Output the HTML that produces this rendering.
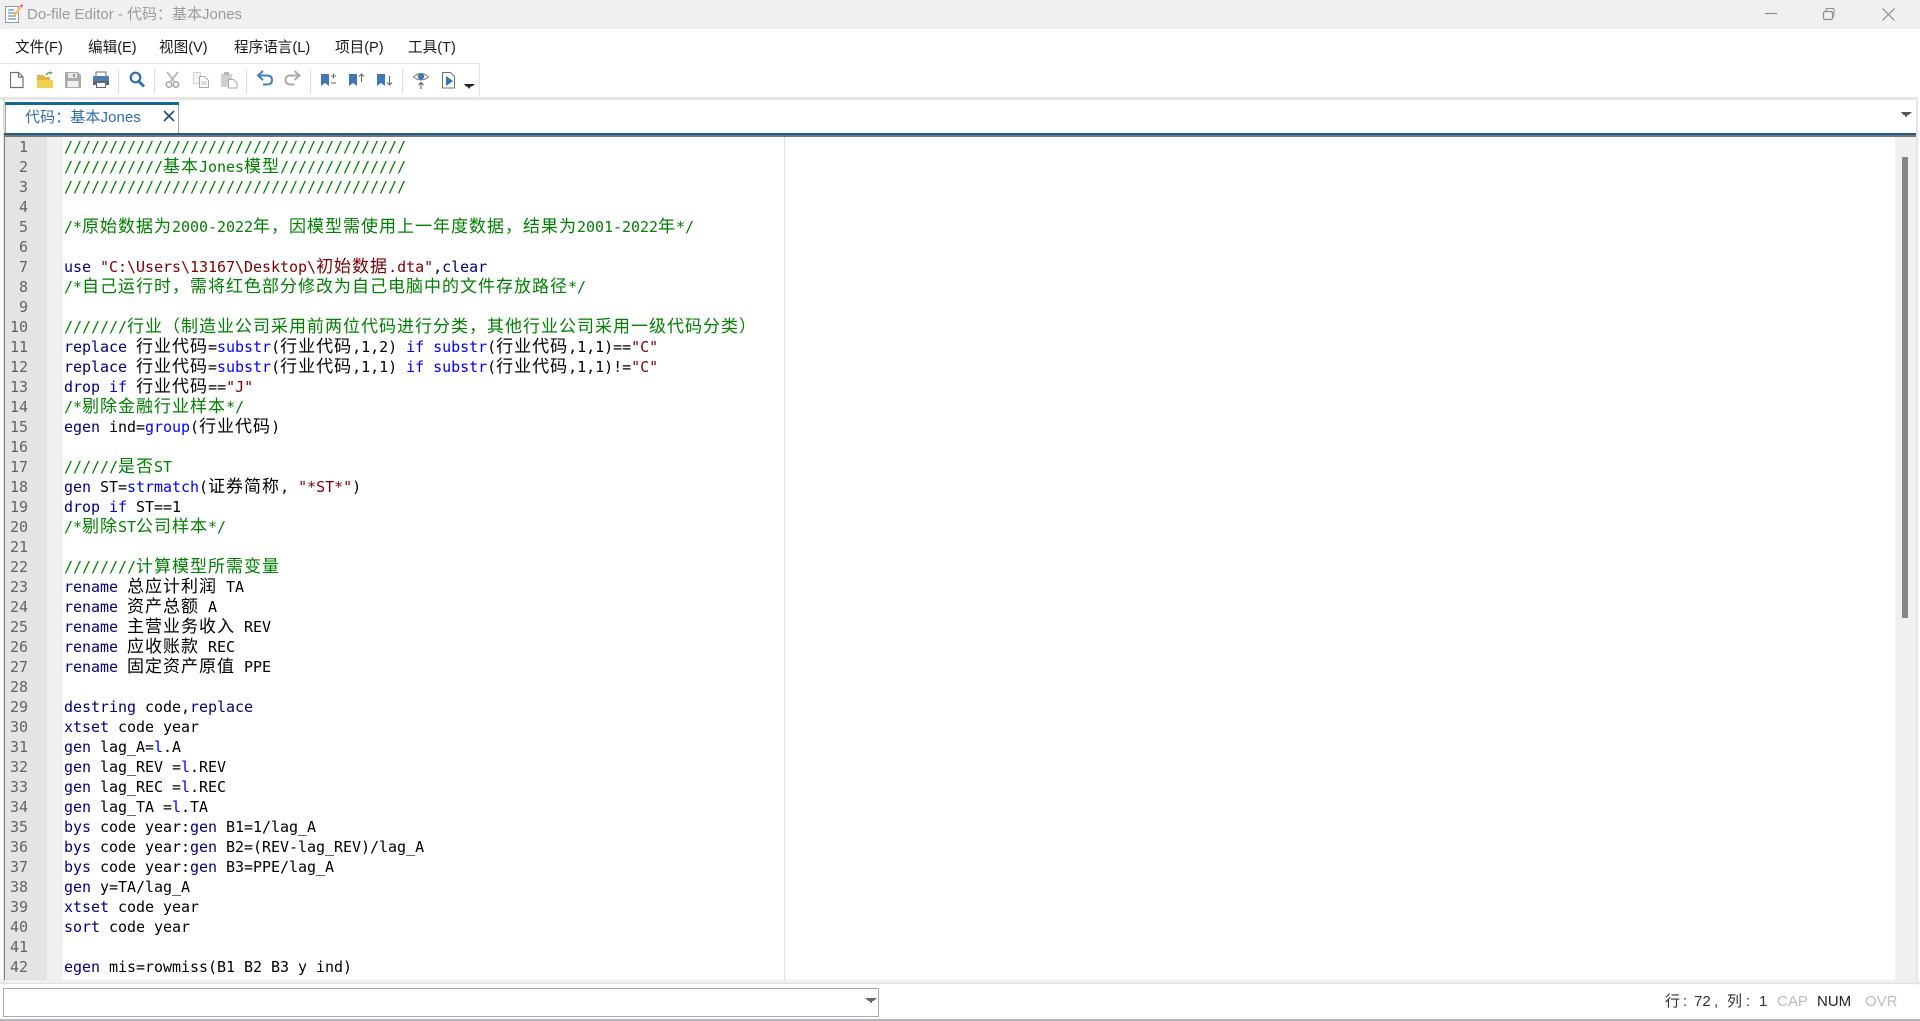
<!DOCTYPE html>
<html lang="zh">
<head>
<meta charset="utf-8">
<title>Do-file Editor</title>
<style>
html,body{margin:0;padding:0;width:1920px;height:1021px;overflow:hidden;background:#fff}
body{position:relative;font-family:"Liberation Sans","Noto Sans CJK SC",sans-serif}
.a{position:absolute}
.m{position:absolute;top:37.500px;font-size:14.600px;line-height:20px;color:#1a1a1a;white-space:pre}
.l{position:absolute;left:64px;height:20px;line-height:20px;font-family:"DejaVu Sans Mono","Noto Sans CJK SC",monospace;font-size:15px;letter-spacing:-.03px;white-space:pre;color:#000}
.l i{font-family:"Noto Sans CJK SC",sans-serif;font-style:normal;font-size:17px;letter-spacing:1px;font-weight:400;line-height:0}
.num{position:absolute;left:5px;width:23px;margin-top:0;text-align:right;height:20px;line-height:20px;font-family:"DejaVu Sans Mono",monospace;font-size:15px;color:#636363}
.g{color:#008000}.n{color:#00007f}.b{color:#0000ff}.r{color:#7f0000}
.s{position:absolute;top:992px;font-size:15px;line-height:20px;white-space:pre}
</style>
</head>
<body>
<!-- title bar -->
<div class="a" style="left:0;top:0;width:1920px;height:29px;background:#f0f0f0"></div>
<svg class="a" style="left:0;top:0" width="30" height="29" viewBox="0 0 30 29">
<rect x="5.500" y="6.500" width="13" height="16" fill="#fff" stroke="#9a9a9a"/>
<path d="M8 10h6M8 13h7M8 16h8M8 19h8" stroke="#5a93cc" stroke-width="1.300"/>
<path d="M13 15l7-9 1.800 1.500-7 9-2.800 1z" fill="#f0c060"/>
<path d="M20 6l1.500-2 1.800 1.500-1.500 2z" fill="#e8606a"/>
</svg>
<div class="a" style="left:27px;top:5px;font-size:15px;line-height:20px;color:#9b9b9b;white-space:pre">Do-file Editor - 代码：基本Jones</div>
<svg class="a" style="left:1700px;top:0" width="220" height="29" viewBox="0 0 220 29" fill="none" stroke="#8e8e8e">
<path d="M65 13.500h12" stroke-width="1.200"/>
<rect x="123.500" y="11.500" width="9" height="8" rx="1.500" stroke-width="1.200"/>
<path d="M126 11V9.500q0-1 1-1h6q1 0 1 1v6q0 1-1 1h-1" stroke-width="1"/>
<path d="M182.500 8.500l12 12M194.500 8.500l-12 12" stroke-width="1.200"/>
</svg>
<!-- menu -->
<div class="m" style="left:15px">文件(F)</div>
<div class="m" style="left:88px">编辑(E)</div>
<div class="m" style="left:159px">视图(V)</div>
<div class="m" style="left:234px">程序语言(L)</div>
<div class="m" style="left:335px">项目(P)</div>
<div class="m" style="left:408px">工具(T)</div>
<!-- toolbar -->
<div class="a" style="left:0;top:63px;width:479px;height:33px;border:1px solid #e2e2e2;border-left:0"></div>
<div class="a" style="left:0;top:97px;width:1917px;height:3px;background:#e6e6e6"></div>
<div class="a" style="left:1916px;top:97px;width:2px;height:888px;background:#e6e6e6"></div>
<div class="a" style="left:3px;top:97px;width:2px;height:888px;background:#e0e0e0"></div>
<svg class="a" style="left:0;top:63px" width="480" height="34" viewBox="0 63 480 34">
<g fill="#dcdcdc"><rect x="118" y="69" width="1" height="25"/><rect x="154" y="69" width="1" height="25"/><rect x="246" y="69" width="1" height="25"/><rect x="310" y="69" width="1" height="25"/><rect x="402" y="69" width="1" height="25"/></g>
<!-- new -->
<path d="M10.500 72.500h8l4.500 4.500v10.500h-12.500z M18.500 72.500v4.500h4.500" fill="#fff" stroke="#707070" stroke-width="1.200"/>
<!-- open -->
<path d="M37 75h6l2 2h5v3h-13z" fill="#e4b33d"/><path d="M37 80h16v8h-16z" fill="#f2d14e"/><path d="M46 75q2-3 5-2" fill="none" stroke="#5fae54" stroke-width="1.600"/><path d="M50 71l3 2-3 1.500z" fill="#5fae54"/>
<!-- save -->
<path d="M65 72h13l3 3v13h-16z" fill="#ababab"/><rect x="68" y="73" width="9" height="5" fill="#e8e8e8"/><rect x="67.500" y="81" width="11" height="6" fill="#f0f0f0"/><rect x="73" y="74" width="2" height="3" fill="#999"/>
<!-- print -->
<rect x="96" y="72" width="10" height="5" fill="#fff" stroke="#6b6b6b"/>
<rect x="93" y="76" width="16" height="8" rx="1" fill="#4b7fb8"/>
<rect x="93" y="81" width="16" height="4" fill="#666"/>
<rect x="96.500" y="82.500" width="9" height="5" fill="#fff" stroke="#666"/>
<!-- search -->
<circle cx="135.500" cy="77.500" r="4.800" fill="none" stroke="#2a6fb0" stroke-width="2.200"/>
<path d="M139 81.500l5 5" stroke="#2a6fb0" stroke-width="2.800"/>
<!-- cut -->
<path d="M167 72l7 9M178 72l-7 9" stroke="#b0b0b0" stroke-width="1.800" fill="none"/>
<circle cx="169" cy="84.500" r="2.700" fill="none" stroke="#a5a5a5" stroke-width="1.500"/><circle cx="176" cy="84.500" r="2.700" fill="none" stroke="#a5a5a5" stroke-width="1.500"/>
<!-- copy -->
<path d="M193.500 72.500h7v11h-7z" fill="#f4f4f4" stroke="#d2d2d2"/><path d="M199.500 76.500h5l4 4v7h-9z" fill="#fff" stroke="#aaa"/><path d="M201 82h6M201 84h6" stroke="#bbb"/>
<!-- paste -->
<path d="M221 74h11v13h-11z" fill="#cfcfcf"/><rect x="224" y="72" width="5" height="3" fill="#b5b5b5"/><path d="M228.500 79.500h5l3.500 3.500v5h-8.500z" fill="#fff" stroke="#a8a8a8"/>
<!-- undo -->
<path d="M259.500 75.500h7.500q5 0 5 4.500t-5 4.500h-4" fill="none" stroke="#3f7fb8" stroke-width="1.900"/><path d="M263 71l-5 4.500 5 4.500" fill="none" stroke="#3f7fb8" stroke-width="1.900"/>
<!-- redo -->
<path d="M298 75.500h-7.500q-5 0-5 4.500t5 4.500h4" fill="none" stroke="#ababab" stroke-width="1.900"/><path d="M294.500 71l5 4.500-5 4.500" fill="none" stroke="#ababab" stroke-width="1.900"/>
<!-- bookmarks -->
<path d="M321 74h8v12l-4-3-4 3z" fill="#3f78b5"/><path d="M331 76h5M333.500 73.500v5M331 83h5" stroke="#666" fill="none"/>
<path d="M349 74h8v12l-4-3-4 3z" fill="#3f78b5"/><path d="M361.500 82v-8M359 76.500l2.500-2.500 2.500 2.500" stroke="#666" fill="none"/>
<path d="M377 74h8v12l-4-3-4 3z" fill="#3f78b5"/><path d="M389.500 76v9M387 82.500l2.500 2.500 2.500-2.500" stroke="#666" fill="none"/>
<!-- eye -->
<path d="M413.500 77q7.500-7 15 0q-7.500 6-15 0z" fill="#fff" stroke="#777"/><circle cx="421" cy="76.500" r="3.200" fill="#3f78b5"/>
<path d="M421 89v-6M418.500 85l2.500-2.500 2.500 2.500" stroke="#555" fill="none"/>
<!-- run -->
<path d="M442.500 72.500h8l4 4v11.500h-12z" fill="#fff" stroke="#707070"/><path d="M446 76l7 5-7 5z" fill="#2f74b5"/>
<path d="M464 84h11l-3 2.500h-1.500l-1 2h-1l-1-2h-1.500z" fill="#222"/>
</svg>
<!-- tab -->
<div class="a" style="left:5px;top:102px;width:174px;height:3px;background:#156794"></div>
<div class="a" style="left:5px;top:105px;width:172px;height:28px;border-left:1px solid #a8a8a8;border-right:1px solid #a8a8a8;background:#fff"></div>
<div class="a" style="left:25px;top:108px;font-size:15px;line-height:20px;color:#2f6db2;white-space:pre;letter-spacing:.1px">代码：基本Jones</div>
<svg class="a" style="left:162px;top:109px" width="14" height="14" viewBox="0 0 14 14"><path d="M2 2l10 10M12 2l-10 10" stroke="#1f4e8c" stroke-width="1.700"/></svg>
<div class="a" style="left:4px;top:133px;width:1912px;height:2px;background:#1b5d86"></div>
<div class="a" style="left:4px;top:135px;width:1912px;height:2px;background:#777"></div>
<svg class="a" style="left:1900px;top:110px" width="14" height="10" viewBox="0 0 14 10"><path d="M1 2h11l-3.500 3h-1l-1 2h-1l-1-2h-1z" fill="#555"/></svg>
<!-- editor chrome -->
<div class="a" style="left:4px;top:137px;width:1px;height:843px;background:#808080"></div>
<div class="a" style="left:5px;top:137px;width:42px;height:843px;background:#e4e4e4"></div>
<div class="a" style="left:47px;top:137px;width:16px;height:843px;background:#f0f0f0"></div>
<div class="a" style="left:784px;top:137px;width:1px;height:843px;background:#e0e0e0"></div>
<div class="a" style="left:1895px;top:137px;width:21px;height:843px;background:#f0f0f0"></div>
<div class="a" style="left:1902px;top:157px;width:6px;height:461px;background:#868686"></div>
<div class="a" style="left:0;top:980px;width:1916px;height:1px;background:#e8e8e8"></div>
<div class="a" style="left:0;top:982px;width:1920px;height:2px;background:#e4e4e4"></div>
<!-- line numbers -->
<div class="num" style="top:137px">1</div><div class="num" style="top:157px">2</div><div class="num" style="top:177px">3</div><div class="num" style="top:197px">4</div><div class="num" style="top:217px">5</div><div class="num" style="top:237px">6</div><div class="num" style="top:257px">7</div><div class="num" style="top:277px">8</div><div class="num" style="top:297px">9</div><div class="num" style="top:317px">10</div><div class="num" style="top:337px">11</div><div class="num" style="top:357px">12</div><div class="num" style="top:377px">13</div><div class="num" style="top:397px">14</div><div class="num" style="top:417px">15</div><div class="num" style="top:437px">16</div><div class="num" style="top:457px">17</div><div class="num" style="top:477px">18</div><div class="num" style="top:497px">19</div><div class="num" style="top:517px">20</div><div class="num" style="top:537px">21</div><div class="num" style="top:557px">22</div><div class="num" style="top:577px">23</div><div class="num" style="top:597px">24</div><div class="num" style="top:617px">25</div><div class="num" style="top:637px">26</div><div class="num" style="top:657px">27</div><div class="num" style="top:677px">28</div><div class="num" style="top:697px">29</div><div class="num" style="top:717px">30</div><div class="num" style="top:737px">31</div><div class="num" style="top:757px">32</div><div class="num" style="top:777px">33</div><div class="num" style="top:797px">34</div><div class="num" style="top:817px">35</div><div class="num" style="top:837px">36</div><div class="num" style="top:857px">37</div><div class="num" style="top:877px">38</div><div class="num" style="top:897px">39</div><div class="num" style="top:917px">40</div><div class="num" style="top:937px">41</div><div class="num" style="top:957px">42</div>
<!-- code -->
<div class="l g" style="top:137px">//////////////////////////////////////</div>
<div class="l g" style="top:157px">///////////<i>基本</i>Jones<i>模型</i>//////////////</div>
<div class="l g" style="top:177px">//////////////////////////////////////</div>
<div class="l g" style="top:217px">/*<i>原始数据为</i>2000-2022<i>年，因模型需使用上一年度数据，结果为</i>2001-2022<i>年</i>*/</div>
<div class="l" style="top:257px"><span class="n">use</span> <span class="r">"C:\Users\13167\Desktop\<i>初始数据</i>.dta"</span>,<span class="n">clear</span></div>
<div class="l g" style="top:277px">/*<i>自己运行时，需将红色部分修改为自己电脑中的文件存放路径</i>*/</div>
<div class="l g" style="top:317px">///////<i>行业（制造业公司采用前两位代码进行分类，其他行业公司采用一级代码分类）</i></div>
<div class="l" style="top:337px"><span class="n">replace</span> <i>行业代码</i>=<span class="b">substr</span>(<i>行业代码</i>,1,2) <span class="b">if</span> <span class="b">substr</span>(<i>行业代码</i>,1,1)==<span class="r">"C"</span></div>
<div class="l" style="top:357px"><span class="n">replace</span> <i>行业代码</i>=<span class="b">substr</span>(<i>行业代码</i>,1,1) <span class="b">if</span> <span class="b">substr</span>(<i>行业代码</i>,1,1)!=<span class="r">"C"</span></div>
<div class="l" style="top:377px"><span class="n">drop</span> <span class="b">if</span> <i>行业代码</i>==<span class="r">"J"</span></div>
<div class="l g" style="top:397px">/*<i>剔除金融行业样本</i>*/</div>
<div class="l" style="top:417px"><span class="n">egen</span> ind=<span class="b">group</span>(<i>行业代码</i>)</div>
<div class="l g" style="top:457px">//////<i>是否</i>ST</div>
<div class="l" style="top:477px"><span class="n">gen</span> ST=<span class="b">strmatch</span>(<i>证券简称</i>, <span class="r">"*ST*"</span>)</div>
<div class="l" style="top:497px"><span class="n">drop</span> <span class="b">if</span> ST==1</div>
<div class="l g" style="top:517px">/*<i>剔除</i>ST<i>公司样本</i>*/</div>
<div class="l g" style="top:557px">////////<i>计算模型所需变量</i></div>
<div class="l" style="top:577px"><span class="n">rename</span> <i>总应计利润</i> TA</div>
<div class="l" style="top:597px"><span class="n">rename</span> <i>资产总额</i> A</div>
<div class="l" style="top:617px"><span class="n">rename</span> <i>主营业务收入</i> REV</div>
<div class="l" style="top:637px"><span class="n">rename</span> <i>应收账款</i> REC</div>
<div class="l" style="top:657px"><span class="n">rename</span> <i>固定资产原值</i> PPE</div>
<div class="l" style="top:697px"><span class="n">destring</span> code,<span class="n">replace</span></div>
<div class="l" style="top:717px"><span class="n">xtset</span> code year</div>
<div class="l" style="top:737px"><span class="n">gen</span> lag_A=<span class="b">l</span>.A</div>
<div class="l" style="top:757px"><span class="n">gen</span> lag_REV =<span class="b">l</span>.REV</div>
<div class="l" style="top:777px"><span class="n">gen</span> lag_REC =<span class="b">l</span>.REC</div>
<div class="l" style="top:797px"><span class="n">gen</span> lag_TA =<span class="b">l</span>.TA</div>
<div class="l" style="top:817px"><span class="n">bys</span> code year:<span class="n">gen</span> B1=1/lag_A</div>
<div class="l" style="top:837px"><span class="n">bys</span> code year:<span class="n">gen</span> B2=(REV-lag_REV)/lag_A</div>
<div class="l" style="top:857px"><span class="n">bys</span> code year:<span class="n">gen</span> B3=PPE/lag_A</div>
<div class="l" style="top:877px"><span class="n">gen</span> y=TA/lag_A</div>
<div class="l" style="top:897px"><span class="n">xtset</span> code year</div>
<div class="l" style="top:917px"><span class="n">sort</span> code year</div>
<div class="l" style="top:957px"><span class="n">egen</span> mis=rowmiss(B1 B2 B3 y ind)</div>
<!-- bottom -->
<div class="a" style="left:3px;top:988px;width:874px;height:27px;border:1.500px solid #a9a9a9"></div>
<svg class="a" style="left:864px;top:996px" width="14" height="10" viewBox="0 0 14 10"><path d="M1 2h12l-3.500 3h-1l-1 2h-1l-1-2h-1z" fill="#666"/></svg>
<div class="s" style="left:1665px;color:#333">行</div>
<div class="s" style="left:1683px;color:#333">:</div>
<div class="s" style="left:1694px;color:#333">72</div>
<div class="s" style="left:1714px;color:#333">,</div>
<div class="s" style="left:1727px;color:#333">列</div>
<div class="s" style="left:1746px;color:#333">:</div>
<div class="s" style="left:1759px;color:#333">1</div>
<div class="s" style="left:1777px;color:#bdbdbd">CAP</div>
<div class="s" style="left:1817px;color:#222">NUM</div>
<div class="s" style="left:1865px;color:#bdbdbd">OVR</div>
<div class="a" style="left:0;top:1019px;width:1920px;height:2px;background:#b4b4be"></div>
</body>
</html>
